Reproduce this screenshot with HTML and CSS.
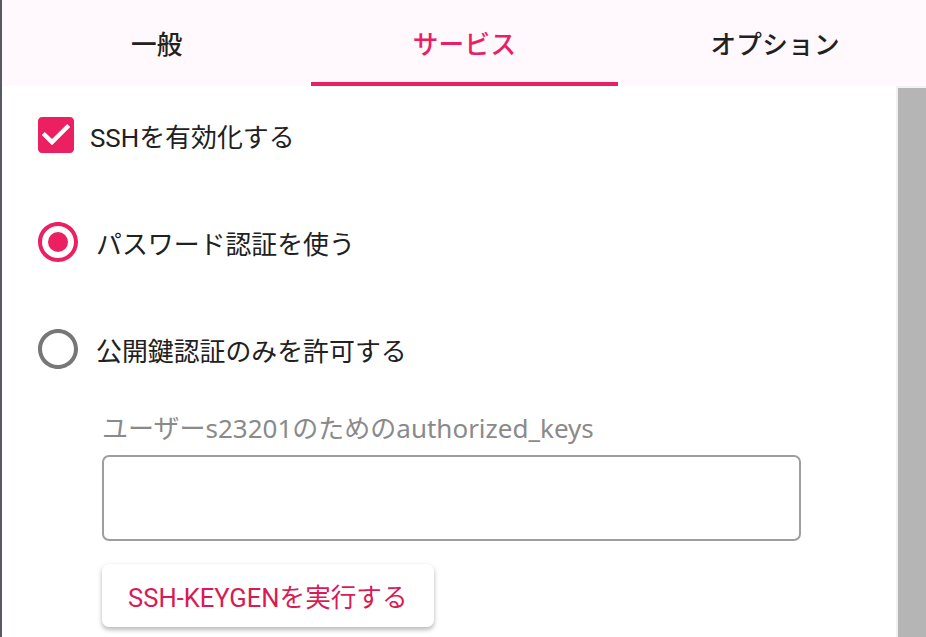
FILE: index.html
```html
<!DOCTYPE html>
<html lang="ja">
<head>
<meta charset="utf-8">
<link rel="stylesheet" href="styles.css">
</head>
<body>
<div class="app">
  <div class="tabs">
    <div class="tab">一般</div>
    <div class="tab active">サービス</div>
    <div class="tab">オプション</div>
  </div>
  <div class="main">
    <div class="content">
      <div class="options">
        <label class="row">
          <svg class="icon checkbox" viewBox="3 3 18 18" width="36" height="36"><path fill="#ec1f63" d="M19 3H5c-1.11 0-2 .9-2 2v14c0 1.1.89 2 2 2h14c1.11 0 2-.9 2-2V5c0-1.1-.89-2-2-2zm-9 14l-5-5 1.41-1.41L10 14.17l7.59-7.59L19 8l-9 9z"/><path fill="#fff" d="M10 17l-5-5 1.41-1.41L10 14.17l7.59-7.59L19 8z"/></svg>
          <span class="text">SSHを有効化する</span>
        </label>
        <label class="row">
          <svg class="icon radio" viewBox="2 2 20 20" width="40" height="40"><path fill="#ec1f63" d="M12 2C6.480 2 2 6.48 2 12s4.48 10 10 10 10-4.48 10-10S17.52 2 12 2zm0 18c-4.42 0-8-3.58-8-8s3.58-8 8-8 8 3.58 8 8-3.58 8-8 8z"/><circle cx="12" cy="12" r="5" fill="#ec1f63"/></svg>
          <span class="text jp">パスワード認証を使う</span>
        </label>
        <label class="row">
          <svg class="icon radio" viewBox="2 2 20 20" width="40" height="40"><path fill="#777" d="M12 2C6.48 2 2 6.48 2 12s4.48 10 10 10 10-4.48 10-10S17.52 2 12 2zm0 18c-4.42 0-8-3.58-8-8s3.58-8 8-8 8 3.58 8 8-3.58 8-8 8z"/></svg>
          <span class="text jp">公開鍵認証のみを許可する</span>
        </label>
      </div>
      <div class="keys">
        <div class="field-label">ユーザーs23201のためのauthorized_keys</div>
        <div class="textarea"></div>
        <button class="btn">SSH-KEYGENを実行する</button>
      </div>
    </div>
    <div class="scrollbar"><div class="thumb"></div></div>
  </div>
</div>
</body>
</html>
```

FILE: styles.css
```css
html, body {
  margin: 0;
  padding: 0;
  background: #fff;
}
body {
  font-family: Roboto, "Noto Sans CJK JP", sans-serif;
  color: #212121;
}
.app {
  height: 637px;
  border-left: 2px solid #575b5f;
  display: flex;
  flex-direction: column;
  overflow: hidden;
}
.tabs {
  height: 86px;
  flex: none;
  background: #fff8fd;
  display: grid;
  grid-template-columns: 1fr 1fr 1fr;
  padding-left: 1px;
}
.tab {
  position: relative;
  display: flex;
  align-items: center;
  justify-content: center;
  font-size: 25.6px;
  font-weight: 500;
  letter-spacing: 0.3px;
  color: #212121;
  padding-bottom: 1px;
}
.tab:last-child {
  padding-left: 6px;
}
.tab.active {
  color: #e91e63;
}
.tab.active::after {
  content: "";
  position: absolute;
  left: 0;
  right: 0;
  bottom: 0;
  height: 4px;
  background: #e91e63;
}
.main {
  flex: 1;
  display: flex;
  min-height: 0;
}
.content {
  flex: 1;
  padding: 25px 0 0 36px;
}
.options {
  display: flex;
  flex-direction: column;
  gap: 59px;
}
.row {
  height: 48px;
  display: flex;
  align-items: center;
  gap: 16px;
  font-size: 25.9px;
}
.icon {
  flex: none;
  display: block;
}
.radio + .text {
  margin-left: 2px;
}
.keys {
  margin-left: 64px;
  display: flex;
  flex-direction: column;
  align-items: flex-start;
}
.field-label {
  margin-top: 39px;
  font-family: "Noto Sans", "Noto Sans CJK JP", sans-serif;
  font-size: 26px;
  line-height: 32px;
  color: #8a8a8a;
}
.textarea {
  margin-top: 11px;
  width: 695px;
  height: 82px;
  border: 2px solid #9e9e9e;
  border-radius: 7px;
}
.btn {
  margin-top: 23px;
  height: 63px;
  padding: 0 26px;
  border: none;
  border-radius: 7px;
  background: #fff;
  color: #d81b55;
  font-family: Roboto, "Noto Sans CJK JP", sans-serif;
  font-size: 25.6px;
  box-shadow: 0 3px 4px rgba(0,0,0,0.22), 0 1px 6px rgba(0,0,0,0.08);
}
.scrollbar {
  width: 28px;
  flex: none;
  background: #f1f1f1;
  padding: 2px 0 0 2px;
}
.thumb {
  height: 100%;
  background: #b5b5b5;
}
```
